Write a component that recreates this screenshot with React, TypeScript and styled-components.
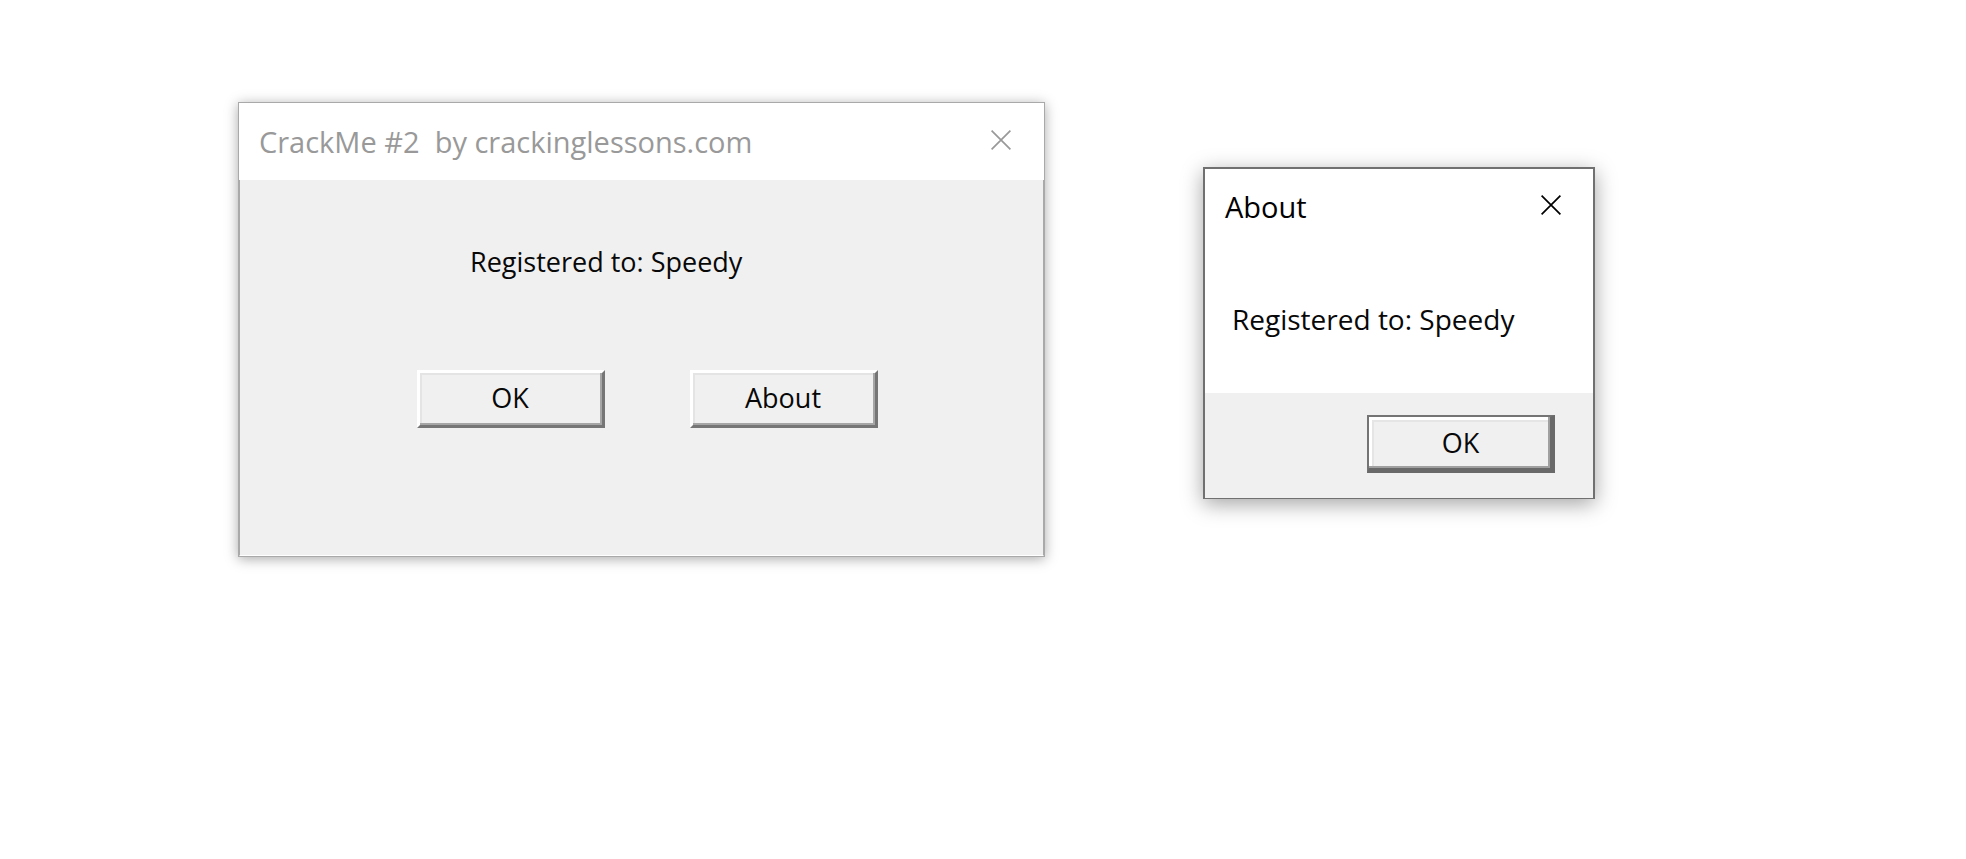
import React from "react";
import styled, { createGlobalStyle } from "styled-components";

const GlobalStyle = createGlobalStyle`
  *, *::before, *::after { box-sizing: border-box; }
  body {
    margin: 0;
    background: #fff;
    color: #080808;
    font-family: "Open Sans", "Noto Sans", sans-serif;
  }
`;

const Desktop = styled.main`
  display: flex;
  align-items: flex-start;
  gap: 158px;
  min-height: 100vh;
  padding: 102px 40px 40px 238px;
`;

const Dialog = styled.section<{ $active?: boolean }>`
  display: flex;
  flex-direction: column;
  flex: 0 1 ${({ $active }) => ($active ? "392px" : "807px")};
  margin-top: ${({ $active }) => ($active ? "65px" : "0")};
  border: solid ${({ $active }) => ($active ? "#707070" : "#a9a9a9")};
  border-width: ${({ $active }) => ($active ? "2px 2px 1px" : "1px")};
  background: #fff;
  box-shadow: ${({ $active }) =>
    $active ? "0 5px 20px rgba(0, 0, 0, 0.36)" : "0 2px 12px rgba(0, 0, 0, 0.34)"};
`;

const TitleBar = styled.header<{ $active?: boolean }>`
  display: flex;
  align-items: flex-start;
  justify-content: space-between;
  height: 77px;
  padding: ${({ $active }) => ($active ? "12px 18px 0 20px" : "13px 19px 0 20px")};
  color: ${({ $active }) => ($active ? "#000" : "#999")};
`;

const Title = styled.h1`
  margin: 6px 0 0;
  font-size: 29px;
  font-weight: 400;
  line-height: 40px;
  white-space: pre;
`;

const CloseButton = styled.button`
  display: grid;
  place-items: center;
  width: 48px;
  height: 48px;
  padding: 0;
  border: 0;
  background: transparent;
  color: inherit;
`;

const FormBody = styled.div`
  padding: 64px 0 127px 177px;
  border: solid #a9a9a9;
  border-width: 0 1px;
  border-bottom: 1px solid #fff;
  background: #f0f0f0;
`;

const FormLabel = styled.p`
  margin: 0 0 90px 53px;
  font-size: 27px;
  line-height: 36px;
`;

const ButtonRow = styled.div`
  display: flex;
  gap: 85px;
`;

const Message = styled.p`
  margin: 0;
  padding: 54px 27px 55px;
  font-size: 28px;
  line-height: 38px;
`;

const Footer = styled.footer`
  display: flex;
  justify-content: flex-end;
  padding: 22px 38px 25px;
  background: #f0f0f0;
`;

const PushButton = styled.button<{ $default?: boolean }>`
  width: 188px;
  height: 58px;
  padding: ${({ $default }) => ($default ? "0 0 0 2px" : "0 2px 2px 0")};
  border: solid;
  border-width: ${({ $default }) => ($default ? "2px 5px 5px 2px" : "3px")};
  border-color: ${({ $default }) =>
    $default ? "#747474 #696969 #696969 #747474" : "#fff #767676 #767676 #fff"};
  background: #f0f0f0;
  box-shadow: ${({ $default }) =>
    $default
      ? "inset -2px -2px #a0a0a0, inset 3px 3px #fff, inset 5px 5px #e5e5e5"
      : "inset -2px -2px #a6a6a6, inset 2px 2px #e4e4e4"};
  color: inherit;
  font-family: inherit;
  font-size: 27px;
  line-height: 36px;
`;

function CloseIcon() {
  return (
    <svg width="20" height="20" viewBox="0 0 20 20" fill="none" stroke="currentColor" strokeWidth="1.7" aria-hidden="true">
      <path d="M.6.6l18.8 18.8M19.4.6L.6 19.4" />
    </svg>
  );
}

function Caption({ title, active }: { title: string; active?: boolean }) {
  return (
    <TitleBar $active={active}>
      <Title>{title}</Title>
      <CloseButton type="button" aria-label="Close">
        <CloseIcon />
      </CloseButton>
    </TitleBar>
  );
}

export default function App() {
  return (
    <>
      <GlobalStyle />
      <Desktop>
        <Dialog>
          <Caption title="CrackMe #2  by crackinglessons.com" />
          <FormBody>
            <FormLabel>Registered to: Speedy</FormLabel>
            <ButtonRow>
              <PushButton type="button">OK</PushButton>
              <PushButton type="button">About</PushButton>
            </ButtonRow>
          </FormBody>
        </Dialog>
        <Dialog $active>
          <Caption title="About" active />
          <Message>Registered to: Speedy</Message>
          <Footer>
            <PushButton type="button" $default>OK</PushButton>
          </Footer>
        </Dialog>
      </Desktop>
    </>
  );
}
